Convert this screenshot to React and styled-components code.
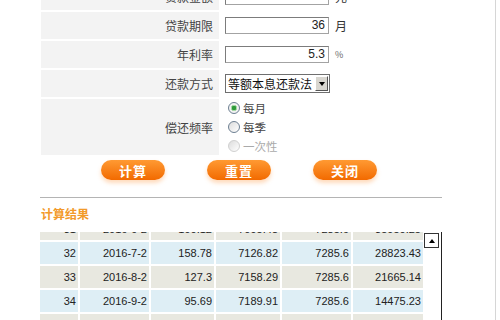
import React from "react"
import styled, { createGlobalStyle } from "styled-components"

const GlobalStyle = createGlobalStyle`
  html, body {
    margin: 0;
    padding: 0;
    background: #fff;
  }
  body {
    font-family: "Liberation Sans", "Noto Sans CJK SC", sans-serif;
    font-size: 12px;
    color: #333;
  }
`

const Page = styled.div`
  width: 496px;
  height: 320px;
  border-right: 1px solid #d6d6d6;
  box-sizing: border-box;
  overflow: hidden;
`

const Content = styled.div`
  margin-left: 40px;
  width: 402px;
`

// form is scrolled so the first row is only partly visible
const FormGrid = styled.div`
  display: grid;
  grid-template-columns: 178px 1fr;
  column-gap: 2px;
  row-gap: 2px;
  margin-top: -17px;
  margin-left: 1px;
`

const Label = styled.div`
  height: ${(p) => (p.tall ? 56 : 27)}px;
  background: #f3f3f3;
  display: flex;
  align-items: center;
  justify-content: flex-end;
  padding-right: 6px;
  font-family: "Noto Sans CJK SC", sans-serif;
  font-size: 12px;
  color: #444;
`

const Value = styled.div`
  display: flex;
  align-items: center;
  gap: 6px;
  padding-left: 4px;
`

const TextInput = styled.div`
  width: 104px;
  height: 17px;
  box-sizing: border-box;
  border: 1px solid #a3a3a3;
  border-top-color: #7c7c7c;
  border-left-color: #7c7c7c;
  text-align: right;
  padding-right: 3px;
  font-size: 12px;
  line-height: 15px;
  color: ${(p) => (p.faint ? "#999" : "#222")};
`

const Unit = styled.span`
  font-family: "Noto Sans CJK SC", sans-serif;
  font-size: ${(p) => (p.small ? 9 : 12)}px;
  color: ${(p) => (p.small ? "#666" : "#333")};
`

const Select = styled.div`
  width: 105px;
  height: 19px;
  box-sizing: border-box;
  border: 1px solid #6f6f6f;
  display: flex;
  align-items: center;
  justify-content: space-between;
  padding: 0 1px 0 2px;
  font-family: "Noto Sans CJK SC", sans-serif;
  font-size: 12px;
  color: #111;
  background: #fff;
`

const SelectArrow = styled.div`
  width: 13px;
  height: 15px;
  box-sizing: border-box;
  background: #d8d6d0;
  border: 1px solid #fff;
  border-right-color: #555;
  border-bottom-color: #555;
  display: flex;
  align-items: center;
  justify-content: center;
  &::after {
    content: "";
    border-left: 3px solid transparent;
    border-right: 3px solid transparent;
    border-top: 4px solid #000;
  }
`

const RadioList = styled.div`
  display: flex;
  flex-direction: column;
  gap: 1px;
  padding-left: 7px;
`

const RadioRow = styled.label`
  display: flex;
  align-items: center;
  gap: 3px;
  height: 18px;
  font-family: "Noto Sans CJK SC", sans-serif;
  font-size: 11.5px;
  color: ${(p) => (p.disabled ? "#aaa" : "#444")};
`

const RadioDot = styled.span`
  width: 12px;
  height: 12px;
  box-sizing: border-box;
  border-radius: 50%;
  border: 1px solid ${(p) => (p.disabled ? "#d0d0d0" : "#6d7f92")};
  background: ${(p) =>
    p.checked
      ? "radial-gradient(circle, #2f9a3a 0 2px, #a6d8a6 2.5px 3px, #f2f2f2 3.5px)"
      : "linear-gradient(135deg, #dcdcdc, #fff)"};
`

const ButtonRow = styled.div`
  display: flex;
  gap: 42px;
  padding-left: 61px;
  margin-top: 5px;
`

const OrangeButton = styled.div`
  width: 64px;
  height: 20px;
  border-radius: 10px;
  background: linear-gradient(#ff9a33, #f26a00);
  box-shadow: 0 3px 4px rgba(255, 150, 60, 0.35);
  color: #fff;
  font-family: "Noto Sans CJK SC", sans-serif;
  font-weight: bold;
  font-size: 13px;
  letter-spacing: 1px;
  display: flex;
  align-items: center;
  justify-content: center;
`

const Rule = styled.div`
  height: 1px;
  background: #b4b4b4;
  margin-top: 17px;
`

const SectionTitle = styled.div`
  margin-top: 8px;
  padding-left: 1px;
  line-height: 16px;
  font-family: "Noto Sans CJK SC", sans-serif;
  font-weight: bold;
  font-size: 12px;
  color: #f29a2a;
`

const ScrollBox = styled.div`
  display: flex;
  height: 90px;
  margin-top: 10px;
  overflow: hidden;
`

const Viewport = styled.div`
  overflow: hidden;
`

// table is scrolled: the previous row is cut off at the top
const ResultGrid = styled.div`
  display: grid;
  grid-template-columns: 38px 69px 63px 64px 69px 70px;
  column-gap: 2px;
  row-gap: 2px;
  margin-top: -14px;
`

const Cell = styled.div`
  height: 22px;
  background: ${(p) => (p.alt ? "#deeef5" : "#e8e8e0")};
  display: flex;
  align-items: center;
  justify-content: flex-end;
  padding-right: 2px;
  font-family: "Liberation Sans", sans-serif;
  font-size: 11px;
  color: #222;
`

const ScrollTrack = styled.div`
  width: 17px;
  margin-left: 1px;
  border-right: 1px solid #222;
  display: flex;
  flex-direction: column;
  align-items: flex-start;
  padding-top: 1px;
`

const ScrollUp = styled.div`
  width: 15px;
  height: 15px;
  box-sizing: border-box;
  border: 1px solid #333;
  display: flex;
  align-items: center;
  justify-content: center;
  &::after {
    content: "";
    border-left: 3px solid transparent;
    border-right: 3px solid transparent;
    border-bottom: 4px solid #000;
  }
`

const rows = [
  ["31", "2016-6-2", "190.12", "7095.48", "7285.6", "35950.25"],
  ["32", "2016-7-2", "158.78", "7126.82", "7285.6", "28823.43"],
  ["33", "2016-8-2", "127.3", "7158.29", "7285.6", "21665.14"],
  ["34", "2016-9-2", "95.69", "7189.91", "7285.6", "14475.23"],
  ["35", "2016-10-2", "63.93", "7221.67", "7285.6", "7253.56"]
]

const frequencies = [
  { text: "每月", checked: true },
  { text: "每季" },
  { text: "一次性", disabled: true }
]

export default function App() {
  return (
    <Page>
      <GlobalStyle />
      <Content>
        <FormGrid>
          <Label>贷款金额</Label>
          <Value>
            <TextInput faint>200000</TextInput>
            <Unit>元</Unit>
          </Value>
          <Label>贷款期限</Label>
          <Value>
            <TextInput>36</TextInput>
            <Unit>月</Unit>
          </Value>
          <Label>年利率</Label>
          <Value>
            <TextInput>5.3</TextInput>
            <Unit small>%</Unit>
          </Value>
          <Label>还款方式</Label>
          <Value>
            <Select>
              等额本息还款法
              <SelectArrow />
            </Select>
          </Value>
          <Label tall>偿还频率</Label>
          <RadioList>
            {frequencies.map((f) => (
              <RadioRow key={f.text} disabled={f.disabled}>
                <RadioDot checked={f.checked} disabled={f.disabled} />
                {f.text}
              </RadioRow>
            ))}
          </RadioList>
        </FormGrid>

        <ButtonRow>
          <OrangeButton>计算</OrangeButton>
          <OrangeButton>重置</OrangeButton>
          <OrangeButton>关闭</OrangeButton>
        </ButtonRow>

        <Rule />
        <SectionTitle>计算结果</SectionTitle>

        <ScrollBox>
          <Viewport>
            <ResultGrid>
              {rows.map((r, i) =>
                r.map((v, j) => (
                  <Cell key={i + "-" + j} alt={i % 2 === 1}>
                    {v}
                  </Cell>
                ))
              )}
            </ResultGrid>
          </Viewport>
          <ScrollTrack>
            <ScrollUp />
          </ScrollTrack>
        </ScrollBox>
      </Content>
    </Page>
  )
}
